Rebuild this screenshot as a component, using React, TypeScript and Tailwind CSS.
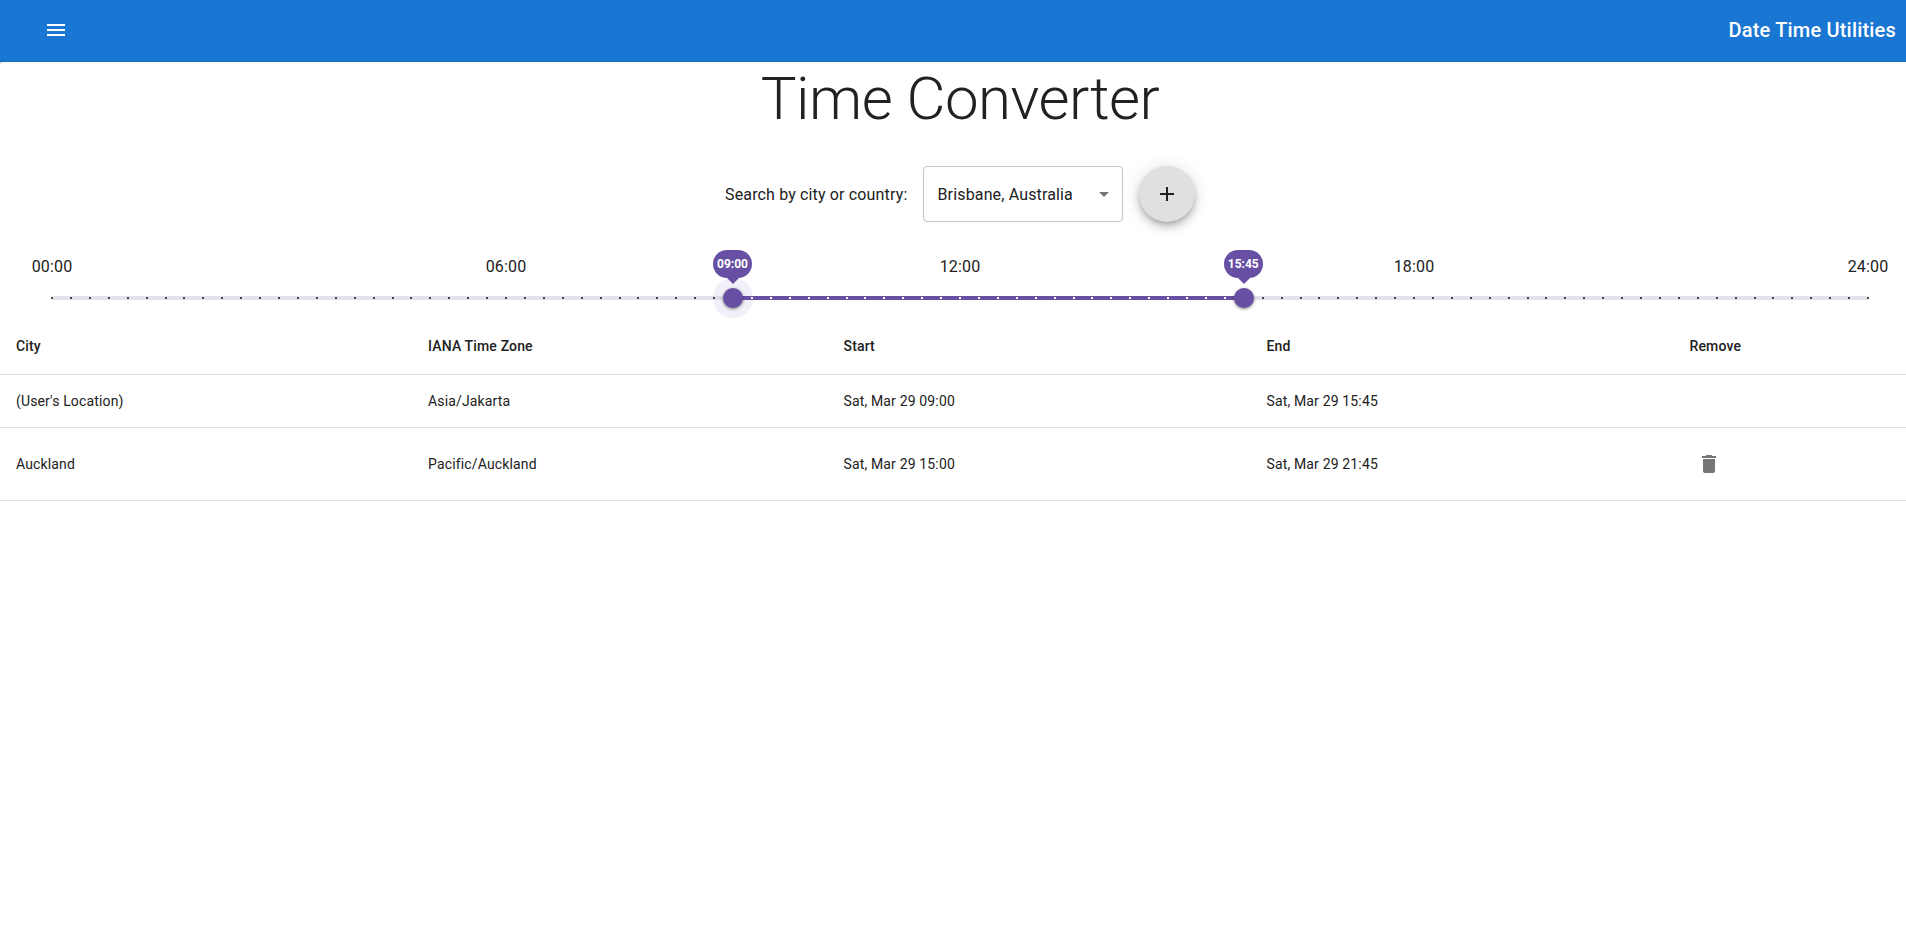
const ROBOTO = "font-['Roboto',sans-serif]";

const START = 36;
const END = 63;
const STEPS = 96;

const hourLabels = ["00:00", "06:00", "12:00", "18:00", "24:00"];

const rows = [
  { city: "(User's Location)", zone: "Asia/Jakarta", start: "Sat, Mar 29 09:00", end: "Sat, Mar 29 15:45", removable: false },
  { city: "Auckland", zone: "Pacific/Auckland", start: "Sat, Mar 29 15:00", end: "Sat, Mar 29 21:45", removable: true },
];

const cell = "border-b border-[#e0e0e0] px-4 py-0";

function Thumb({ step, label, active }: { step: number; label: string; active?: boolean }) {
  return (
    <div className="absolute top-1/2 h-0 w-0" style={{ left: `${(step / STEPS) * 100}%` }}>
      {active && <div className="absolute -left-5 -top-5 h-10 w-10 rounded-full bg-[#f1eff7]" />}
      {active && <div className="absolute -left-5 -top-0.5 h-1 w-5 bg-[#e0dae9]" />}
      {active && <div className="absolute left-0 -top-0.5 h-1 w-5 bg-[#6750a4]" />}
      {active && <div className="absolute -left-5 -top-px h-0.5 w-0.5 bg-[#49454f]" />}
      {active && <div className="absolute left-[18px] -top-px h-0.5 w-0.5 bg-white" />}
      <div className="absolute -left-2.5 -top-2.5 h-5 w-5 rounded-full bg-[#6750a4] shadow-[0_1px_2px_rgba(0,0,0,0.3),0_1px_3px_1px_rgba(0,0,0,0.15)]" />
      <div className="absolute -left-[20px] -top-12 flex h-7 w-[39px] items-center justify-center rounded-[14px] bg-[#6750a4] text-xs font-bold leading-4 text-white">
        {label}
      </div>
      <svg className="absolute -left-1.5 -top-5" width="12" height="6" viewBox="0 0 12 6" fill="#6750a4">
        <path d="M0 0h12L6 6z" />
      </svg>
    </div>
  );
}

function TimeSlider() {
  return (
    <div className="flex h-[78px] flex-col pl-[52px] pr-[38px]">
      <div className="mt-[15px] flex h-6 justify-between text-base leading-6 tracking-[0.15px]">
        {hourLabels.map((h) => (
          <div key={h} className="flex w-0 justify-center whitespace-nowrap">{h}</div>
        ))}
      </div>
      <div className="relative mt-[17px] h-1">
        <div className="absolute -left-px -right-px h-1 rounded-[2px] bg-[#e6e0e9]" />
        <div
          className="absolute h-1 bg-[#6750a4]"
          style={{ left: `${(START / STEPS) * 100}%`, width: `${((END - START) / STEPS) * 100}%` }}
        />
        {Array.from({ length: STEPS + 1 }, (_, i) => (
          <div
            key={i}
            className={i > START && i < END ? "absolute top-px -ml-px h-0.5 w-0.5 bg-white" : "absolute top-px -ml-px h-0.5 w-0.5 bg-[#49454f]"}
            style={{ left: `${(i / STEPS) * 100}%` }}
          />
        ))}
        <Thumb step={START} label="09:00" active />
        <Thumb step={END} label="15:45" />
      </div>
    </div>
  );
}

export default function App() {
  return (
    <div className={`${ROBOTO} min-h-screen overflow-hidden bg-white text-[#212121]`}>
      <header className="flex h-[62px] items-center justify-between bg-[#1976d2] pb-0.5 pl-11 pr-[10px] text-white shadow-[inset_0_-1px_0_#186bbd]">
        <svg width="24" height="24" viewBox="0 0 24 24" fill="currentColor">
          <path d="M3 18h18v-2H3v2zm0-5h18v-2H3v2zm0-7v2h18V6H3z" />
        </svg>
        <div className="text-xl font-medium leading-8 tracking-[0.19px]">Date Time Utilities</div>
      </header>

      <main className="bg-[#d4d4d4]">
        <div className="rounded-tl-[4px] bg-white">
          <h1 className="pl-[14px] pt-px text-center text-[60px] font-light leading-[72px] tracking-[-0.5px]">Time Converter</h1>

          <div className="mt-[31px] flex h-14 items-center pl-[725px] text-base">
            <span className="w-[198px] pt-0.5 tracking-[0.15px]">Search by city or country:</span>
            <div className="flex h-14 w-[200px] items-center justify-between rounded-[4px] border border-[#c4c4c4] pl-[13.5px] pr-[6px] tracking-[0.15px]">
              <span className="pt-0.5">Brisbane, Australia</span>
              <svg width="24" height="24" viewBox="0 0 24 24" fill="#757575">
                <path d="M7 10l5 5 5-5z" />
              </svg>
            </div>
            <button className="ml-4 flex h-14 w-14 items-center justify-center rounded-full bg-[#e0e0e0] text-[#212121] shadow-[0_3px_5px_-1px_rgba(0,0,0,0.2),0_6px_10px_0_rgba(0,0,0,0.14),0_1px_18px_0_rgba(0,0,0,0.12)]">
              <svg width="24" height="24" viewBox="0 0 24 24" fill="currentColor">
                <path d="M19 13h-6v6h-2v-6H5v-2h6V5h2v6h6v2z" />
              </svg>
            </button>
          </div>

          <div className="mt-[18px]">
            <TimeSlider />
          </div>

          <table className="w-full table-fixed border-separate border-spacing-0 text-left text-sm tracking-[0.15px]">
            <colgroup>
              <col className="w-[412px]" />
              <col className="w-[415.5px]" />
              <col className="w-[423px]" />
              <col className="w-[423px]" />
              <col />
            </colgroup>
            <thead>
              <tr className="h-[57px]">
                {["City", "IANA Time Zone", "Start", "End", "Remove"].map((h) => (
                  <th key={h} className={`${cell} font-medium`}>{h}</th>
                ))}
              </tr>
            </thead>
            <tbody>
              {rows.map((r) => (
                <tr key={r.city} className={r.removable ? "h-[73px]" : "h-[53px]"}>
                  <td className={cell}>{r.city}</td>
                  <td className={cell}>{r.zone}</td>
                  <td className={cell}>{r.start}</td>
                  <td className={cell}>{r.end}</td>
                  <td className={cell}>
                    {r.removable && (
                      <svg className="ml-[7px] block" width="24" height="24" viewBox="0 0 24 24" fill="#757575">
                        <path d="M6 19c0 1.100.9 2 2 2h8c1.100 0 2-.9 2-2V7H6v12zM19 4h-3.500l-1-1h-5l-1 1H5v2h14V4z" />
                      </svg>
                    )}
                  </td>
                </tr>
              ))}
            </tbody>
          </table>
        </div>
      </main>
    </div>
  );
}
